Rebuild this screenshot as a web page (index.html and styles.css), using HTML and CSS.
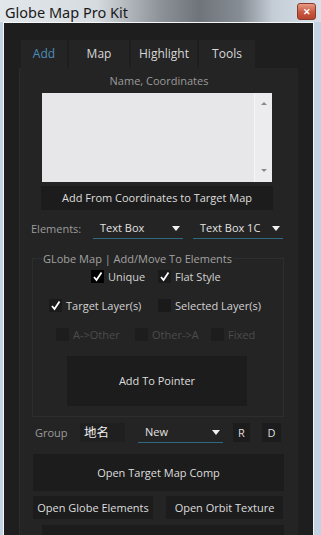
FILE: index.html
```html
<!DOCTYPE html>
<html lang="en">
<head>
    <meta charset="UTF-8">
    <title>Globe Map Pro Kit</title>
    <link rel="stylesheet" href="styles.css">
</head>
<body>
    <div class="window">
        <div class="titlebar">
            <span class="title">Globe Map Pro Kit</span>
            <span class="close">&#x2715;</span>
        </div>
        <div class="frame">
            <div class="content">
                <div class="tabs">
                    <div class="tab active">Add</div>
                    <div class="tab">Map</div>
                    <div class="tab">Highlight</div>
                    <div class="tab">Tools</div>
                </div>
                <div class="pane">
                    <div class="caption">Name, Coordinates</div>
                    <div class="textarea">
                        <div class="scroll">
                            <span class="arrow up"></span>
                            <span class="arrow down"></span>
                        </div>
                    </div>
                    <div class="btn btn-wide">Add From Coordinates to Target Map</div>

                    <div class="row elements">
                        <span class="label">Elements:</span>
                        <div class="select sel-1">Text Box<span class="tri"></span></div>
                        <div class="select sel-2">Text Box 1C<span class="tri"></span></div>
                    </div>

                    <fieldset class="group">
                        <legend>GLobe Map | Add/Move To Elements</legend>
                        <div class="checks checks-1">
                            <label class="check"><span class="box focus"><svg viewBox="0 0 13 13"><path d="M3 7l2.5 3L10.5 2.5" fill="none" stroke="#fff"/></svg></span>Unique</label>
                            <label class="check"><span class="box"><svg viewBox="0 0 13 13"><path d="M3 7l2.5 3L10.5 2.5" fill="none" stroke="#fff"/></svg></span>Flat Style</label>
                        </div>
                        <div class="checks checks-2">
                            <label class="check"><span class="box"><svg viewBox="0 0 13 13"><path d="M3 7l2.5 3L10.5 2.5" fill="none" stroke="#fff"/></svg></span>Target Layer(s)</label>
                            <label class="check"><span class="box"></span>Selected Layer(s)</label>
                        </div>
                        <div class="checks checks-3 disabled">
                            <label class="check"><span class="box"></span>A-&gt;Other</label>
                            <label class="check"><span class="box"></span>Other-&gt;A</label>
                            <label class="check"><span class="box"></span>Fixed</label>
                        </div>
                        <div class="btn btn-pointer">Add To Pointer</div>
                    </fieldset>

                    <div class="row group-row">
                        <span class="label label-group">Group</span>
                        <div class="field">地名</div>
                        <div class="select sel-new">New<span class="tri"></span></div>
                        <div class="btn btn-small btn-r">R</div>
                        <div class="btn btn-small btn-d">D</div>
                    </div>

                    <div class="btn btn-open">Open Target Map Comp</div>
                    <div class="row open-row">
                        <div class="btn btn-half">Open Globe Elements</div>
                        <div class="btn btn-half">Open Orbit Texture</div>
                    </div>
                    <div class="btn btn-last"></div>
                </div>
            </div>
        </div>
    </div>
</body>
</html>
```

FILE: styles.css
```css
html, body {
    margin: 0;
    padding: 0;
    height: 100%;
    overflow: hidden;
}
body {
    font-family: "Open Sans", "Noto Sans CJK SC", sans-serif;
    font-size: 11px;
    background: #c9d6e3;
}
.window {
    display: flex;
    flex-direction: column;
    height: 100%;
}
.titlebar {
    height: 22px;
    flex: none;
    display: flex;
    align-items: center;
    justify-content: space-between;
    padding: 0 5px 0 5px;
    background: linear-gradient(90deg, #e2e7ec 0%, #d6dbe0 30%, #8d9298 50%, #6f747b 62%, #878d94 75%, #c4ccd5 85%, #d9e2ec 100%);
}
.title {
    font-family: "Noto Sans", sans-serif;
    font-size: 14.5px;
    color: #1a1a1a;
    margin-top: 2px;
}
.close {
    width: 19px;
    height: 17px;
    margin-top: 1px;
    border-radius: 3px;
    border: 1px solid #8a3a2a;
    box-sizing: border-box;
    background: linear-gradient(#e89a85, #c7573f 55%, #b8442e);
    color: #fff;
    font-size: 9px;
    font-weight: bold;
    display: flex;
    align-items: center;
    justify-content: center;
}
.frame {
    flex: 1;
    min-height: 0;
    padding: 0 7px 0 3px;
    background: #c3d3e3;
}
.content {
    height: 100%;
    border: 1px solid #f4f6f8;
    border-bottom: none;
    background: #1e1e1e;
    padding: 17px 15px 0 15px;
    box-sizing: border-box;
    display: flex;
    flex-direction: column;
    overflow: hidden;
}
.tabs {
    display: flex;
    flex: none;
    gap: 2px;
    padding-left: 2px;
}
.tab {
    height: 28px;
    line-height: 28px;
    font-size: 12px;
    background: #242424;
    color: #d8d8d8;
    text-align: center;
}
.tab:nth-child(1) { width: 46px; }
.tab:nth-child(2) { width: 60px; }
.tab:nth-child(3) { width: 66px; }
.tab:nth-child(4) { width: 56px; }
.tab.active {
    color: #4d8fb8;
}
.pane {
    flex: 1;
    background: #242424;
    border-left: 1px solid #2b2b2b;
    display: flex;
    flex-direction: column;
    align-items: flex-start;
}
.pane > * {
    flex: none;
}
.caption {
    align-self: stretch;
    text-align: center;
    color: #9a9a9a;
    margin-top: 4px;
    line-height: 17px;
}
.textarea {
    margin: 4px 0 0 22px;
    width: 230px;
    height: 89px;
    background: #e7e7e9;
    display: flex;
    justify-content: flex-end;
}
.scroll {
    width: 17px;
    background: #ececef;
    border-left: 1px solid #f6f6f8;
    position: relative;
}
.arrow {
    position: absolute;
    left: 6px;
    width: 0;
    height: 0;
    border-left: 3px solid transparent;
    border-right: 3px solid transparent;
}
.arrow.up {
    top: 9px;
    border-bottom: 3px solid #8a8a8a;
}
.arrow.down {
    bottom: 10px;
    border-top: 3px solid #8a8a8a;
}
.btn {
    background: #1c1c1c;
    color: #dedede;
    text-align: center;
    white-space: nowrap;
    box-sizing: border-box;
}
.btn-wide {
    margin: 4px 0 0 21px;
    width: 232px;
    height: 24px;
    line-height: 24px;
}
.row {
    display: flex;
    align-items: center;
}
.elements {
    margin: 8px 0 0 11px;
}
.label {
    color: #9c9c9c;
    width: 62px;
}
.select {
    position: relative;
    height: 21px;
    line-height: 20px;
    color: #e2e2e2;
    padding-left: 7px;
    border-bottom: 1px solid #2f6a80;
    box-sizing: border-box;
}
.tri {
    position: absolute;
    right: 3px;
    top: 8px;
    border-left: 4px solid transparent;
    border-right: 4px solid transparent;
    border-top: 5px solid #f0f0f0;
}
.sel-1 {
    width: 90px;
}
.sel-2 {
    width: 90px;
    margin-left: 10px;
}
.group {
    margin: 12px 0 0 12px;
    width: 252px;
    box-sizing: border-box;
    border: 1px solid #2e2e2e;
    padding: 0 0 10px 0;
    display: flex;
    flex-direction: column;
    align-items: flex-start;
}
.group legend {
    color: #a2a2a2;
    padding: 0 1px;
    margin-left: 9px;
}
.checks {
    display: flex;
    color: #d2d2d2;
}
.check {
    display: flex;
    align-items: center;
    gap: 4px;
    height: 17px;
}
.box {
    width: 13px;
    height: 13px;
    background: #1a1a1a;
    flex: none;
}
.box.focus {
    background: #000;
}
.box svg {
    display: block;
    width: 13px;
    height: 13px;
    stroke-width: 1.8;
}
.checks-1 {
    margin: 2px 0 0 58px;
}
.checks-1 .check:first-child { width: 67px; }
.checks-2 {
    margin: 12px 0 0 16px;
}
.checks-2 .check:first-child { width: 109px; }
.checks-3 {
    margin: 12px 0 0 23px;
}
.checks-3 .check:nth-child(1) { width: 79px; }
.checks-3 .check:nth-child(2) { width: 76px; }
.disabled {
    color: #4c4c4c;
}
.disabled .box {
    background: #1d1d1d;
}
.btn-pointer {
    margin: 13px 0 0 34px;
    width: 180px;
    height: 50px;
    line-height: 50px;
}
.group-row {
    margin: 6px 0 0 15px;
    height: 19px;
}
.label-group {
    width: 45px;
}
.field {
    width: 45px;
    height: 19px;
    line-height: 19px;
    font-size: 12.5px;
    background: #1f1f1f;
    color: #eeeeee;
    padding-left: 4px;
    box-sizing: border-box;
}
.sel-new {
    margin-left: 13px;
    width: 85px;
}
.btn-small {
    height: 19px;
    line-height: 19px;
}
.btn-r {
    margin-left: 10px;
    width: 17px;
}
.btn-d {
    margin-left: 12px;
    width: 19px;
}
.btn-open {
    margin: 12px 0 0 13px;
    width: 251px;
    height: 37px;
    line-height: 37px;
}
.open-row {
    margin: 5px 0 0 13px;
    gap: 13px;
}
.btn-half {
    width: 120px;
    height: 23px;
    line-height: 23px;
}
.btn-half + .btn-half {
    width: 117px;
}
.btn-last {
    margin: 6px 0 0 22px;
    width: 242px;
    height: 20px;
}
```
